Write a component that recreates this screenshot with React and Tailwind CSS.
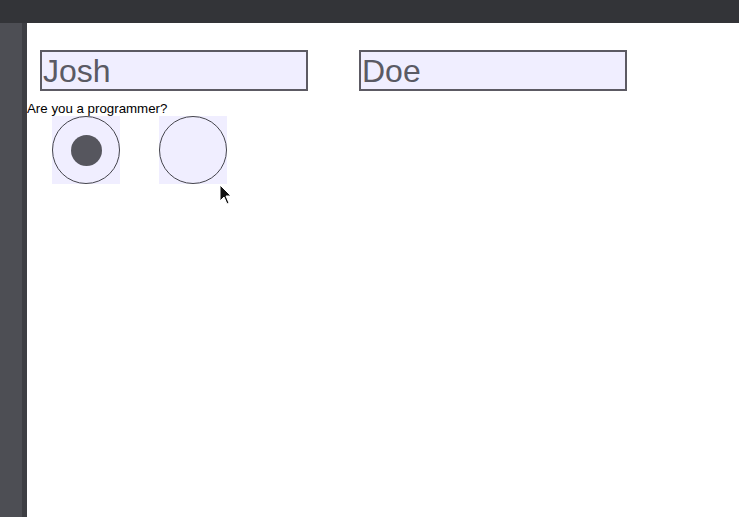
import React, { useState } from "react";

const RadioBox = ({ checked, onClick }) => (
  <button
    type="button"
    onClick={onClick}
    className="w-[68px] h-[68px] bg-[#f0eeff] flex items-center justify-center"
  >
    <span className="w-[68px] h-[68px] rounded-full border border-[#44444c] flex items-center justify-center">
      {checked && <span className="w-[31px] h-[31px] rounded-full bg-[#56565e]" />}
    </span>
  </button>
);

const App = () => {
  const [first, setFirst] = useState("Josh");
  const [last, setLast] = useState("Doe");
  const [programmer, setProgrammer] = useState(true);

  return (
    <div className="flex flex-col w-[739px] h-[517px] overflow-hidden font-['Liberation_Sans',Arial,sans-serif]">
      <div className="h-[23px] bg-[#333438] shrink-0" />
      <div className="flex flex-1">
        <div className="w-[27px] flex shrink-0">
          <div className="w-[22px] bg-[#4d4e54]" />
          <div className="w-[5px] bg-[#3d3e43]" />
        </div>
        <div className="relative flex-1 bg-white">
          <div className="flex gap-[51px] pl-[13px] pt-[27px]">
            <input
              value={first}
              onChange={(e) => setFirst(e.target.value)}
              className="w-[268px] h-[41px] bg-[#f0eeff] border-2 border-[#5c5a63] px-[1px] pt-[2px] text-[32px] leading-[37px] text-[#5a5a64] outline-none"
            />
            <input
              value={last}
              onChange={(e) => setLast(e.target.value)}
              className="w-[268px] h-[41px] bg-[#f0eeff] border-2 border-[#5c5a63] px-[1px] pt-[2px] text-[32px] leading-[37px] text-[#5a5a64] outline-none"
            />
          </div>
          <div className="mt-[10px] text-[13.3px] leading-[15px] text-black">Are you a programmer?</div>
          <div className="flex gap-[39px] pl-[25px]">
            <RadioBox checked={programmer} onClick={() => setProgrammer(true)} />
            <RadioBox checked={!programmer} onClick={() => setProgrammer(false)} />
          </div>
          <svg
            className="absolute left-[192px] top-[161px]"
            width="14"
            height="22"
            viewBox="0 0 14 22"
          >
            <path d="M1 1 L1 17 L5 13 L8 20 L10 19 L7 12 L12 12 Z" fill="#111" stroke="#fff" strokeWidth="1" />
          </svg>
        </div>
      </div>
    </div>
  );
};

export default App;
